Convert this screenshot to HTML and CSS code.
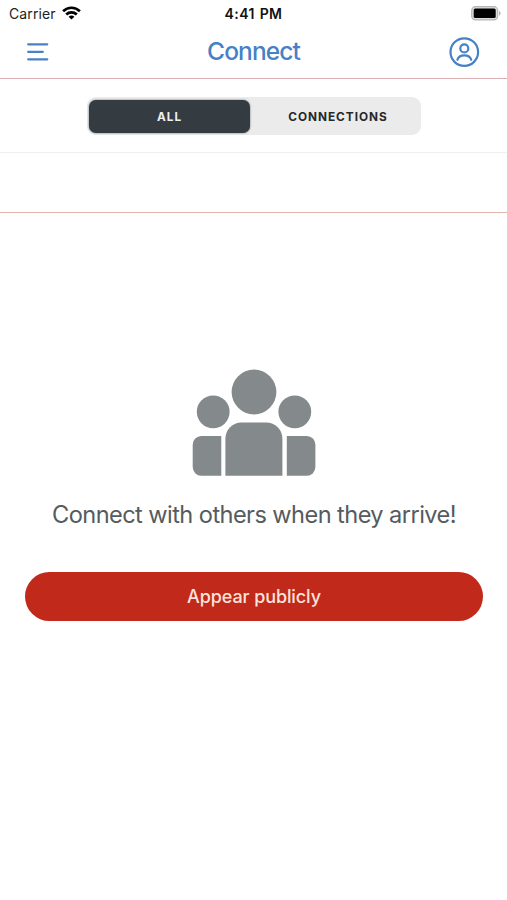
FILE: index.html
```html
<!DOCTYPE html>
<html lang="en">
<head>
    <meta charset="UTF-8">
    <meta name="viewport" content="width=device-width, initial-scale=1.0">
    <title>Connect</title>
    <link rel="stylesheet" href="styles.css">
</head>
<body>
    <div class="status-bar">
        <div class="carrier">
            <span>Carrier</span>
            <svg class="wifi" width="19" height="14" viewBox="0 0 19 14">
                <g fill="none" stroke="#000" stroke-width="2.7">
                    <path d="M1.1 5.2C6 .6 13 .6 17.9 5.2"/>
                    <path d="M4.2 8.5C7.2 5.7 11.8 5.7 14.8 8.5"/>
                </g>
                <path d="M6.6 10.7C8.2 9.2 10.8 9.2 12.4 10.7L9.5 13.6z"/>
            </svg>
        </div>
        <span class="clock">4:41 PM</span>
        <svg class="battery" width="30" height="15" viewBox="0 0 30 15">
            <rect x=".7" y=".7" width="26" height="13.2" rx="3.8" fill="#ddd" stroke="#b5b5b5" stroke-width="1.2"/>
            <rect x="2.7" y="2.5" width="22" height="9.6" rx="1.6"/>
            <path d="M28.2 5v4.6c1.8-.7 1.8-3.9 0-4.6z" fill="#a9a9a9"/>
        </svg>
    </div>

    <div class="nav">
        <svg class="menu" width="22" height="20" viewBox="0 0 22 20">
            <path d="M1.2 2.3h19M1.2 9.8h14.6M1.2 17.3h19" fill="none" stroke="#4b80c2" stroke-width="2.3" stroke-linecap="round"/>
        </svg>
        <h1>Connect</h1>
        <svg class="profile" width="32" height="32" viewBox="0 0 32 32">
            <g fill="none" stroke="#4680c6" stroke-width="2.2" stroke-linecap="round">
                <circle cx="16.3" cy="16.1" r="13.8"/>
                <circle cx="16.3" cy="12.4" r="4"/>
                <path d="M9.4 23.8C11 17.8 21.6 17.8 23.2 23.8"/>
            </g>
        </svg>
    </div>

    <div class="filter">
        <div class="tabs">
            <div class="tab active">ALL</div>
            <div class="tab">CONNECTIONS</div>
        </div>
    </div>
    <div class="strip"></div>

    <div class="empty">
        <svg class="people" width="124" height="108" viewBox="192 369 124 108" fill="#84898c">
            <circle cx="254" cy="392" r="22.4"/>
            <circle cx="213.2" cy="411.8" r="16.4"/>
            <circle cx="294.8" cy="411.8" r="16.4"/>
            <path d="M225.4 475.7V438.5a16 16 0 0 1 16-16h25a16 16 0 0 1 16 16v37.2z"/>
            <path d="M221.3 436v39.7h-20a8.6 8.6 0 0 1-8.6-8.6v-22.5a8.6 8.6 0 0 1 8.6-8.6z"/>
            <path d="M286.8 436v39.7h20a8.6 8.6 0 0 0 8.6-8.6v-22.5a8.6 8.6 0 0 0-8.6-8.6z"/>
        </svg>
        <p class="message">Connect with others when they arrive!</p>
        <button class="appear">Appear publicly</button>
    </div>
</body>
</html>
```

FILE: styles.css
```css
body {
    margin: 0;
    height: 900px;
    background: #fff;
    font-family: Inter, 'Liberation Sans', sans-serif;
    overflow: hidden;
}
.status-bar {
    display: grid;
    grid-template-columns: 1fr auto 1fr;
    align-items: center;
    height: 26px;
    padding: 0 6px 0 9px;
    font-size: 14px;
    color: #222;
}
.carrier {
    display: flex;
    align-items: center;
    gap: 6px;
    letter-spacing: 0.1px;
}
.clock {
    margin-right: 3px;
    font-weight: 600;
    letter-spacing: 0.4px;
    word-spacing: 1px;
    color: #111;
}
.battery {
    justify-self: end;
}
.nav {
    display: flex;
    justify-content: space-between;
    align-items: center;
    height: 52px;
    padding: 0 27px;
    border-bottom: 1px solid #dcb0b2;
}
.menu {
    margin-right: 10px;
}
h1 {
    margin: 0 0 2px;
    font-size: 24.5px;
    font-weight: 450;
    letter-spacing: -0.9px;
    color: #4680c6;
}
.filter {
    display: flex;
    justify-content: center;
    align-items: center;
    height: 73px;
    border-bottom: 1px solid #f0f0f0;
}
.tabs {
    display: flex;
    align-items: center;
    box-sizing: border-box;
    width: 334px;
    height: 38px;
    padding: 3px 2px 2px;
    background: #ebebeb;
    border-radius: 9px;
}
.tab {
    display: flex;
    flex: 1;
    justify-content: center;
    align-items: center;
    padding: 1px 0 0 8px;
    border-radius: 7px;
    font-size: 11.8px;
    font-weight: 700;
    letter-spacing: 1px;
    color: #25282b;
}
.tab.active {
    flex: 0 0 160px;
    height: 32px;
    padding: 1px 0 0 1px;
    background: #343c42;
    color: #edf0f2;
    box-shadow: 0 0 2px #59656b;
}
.strip {
    height: 59px;
    border-bottom: 1px solid #dfb5ac;
}
.empty {
    display: flex;
    flex-direction: column;
    align-items: center;
    padding: 156px 24px 0 25px;
}
.message {
    margin: 23px 0 42px;
    font-size: 23.6px;
    line-height: 30px;
    letter-spacing: -0.57px;
    color: #555b5e;
    white-space: nowrap;
}
.appear {
    width: 100%;
    height: 49px;
    padding: 0;
    border: 0;
    border-radius: 25px;
    background: #c12a1a;
    color: #fbe3dd;
    font-family: inherit;
    font-size: 18px;
    font-weight: 500;
    letter-spacing: -0.1px;
}
```
